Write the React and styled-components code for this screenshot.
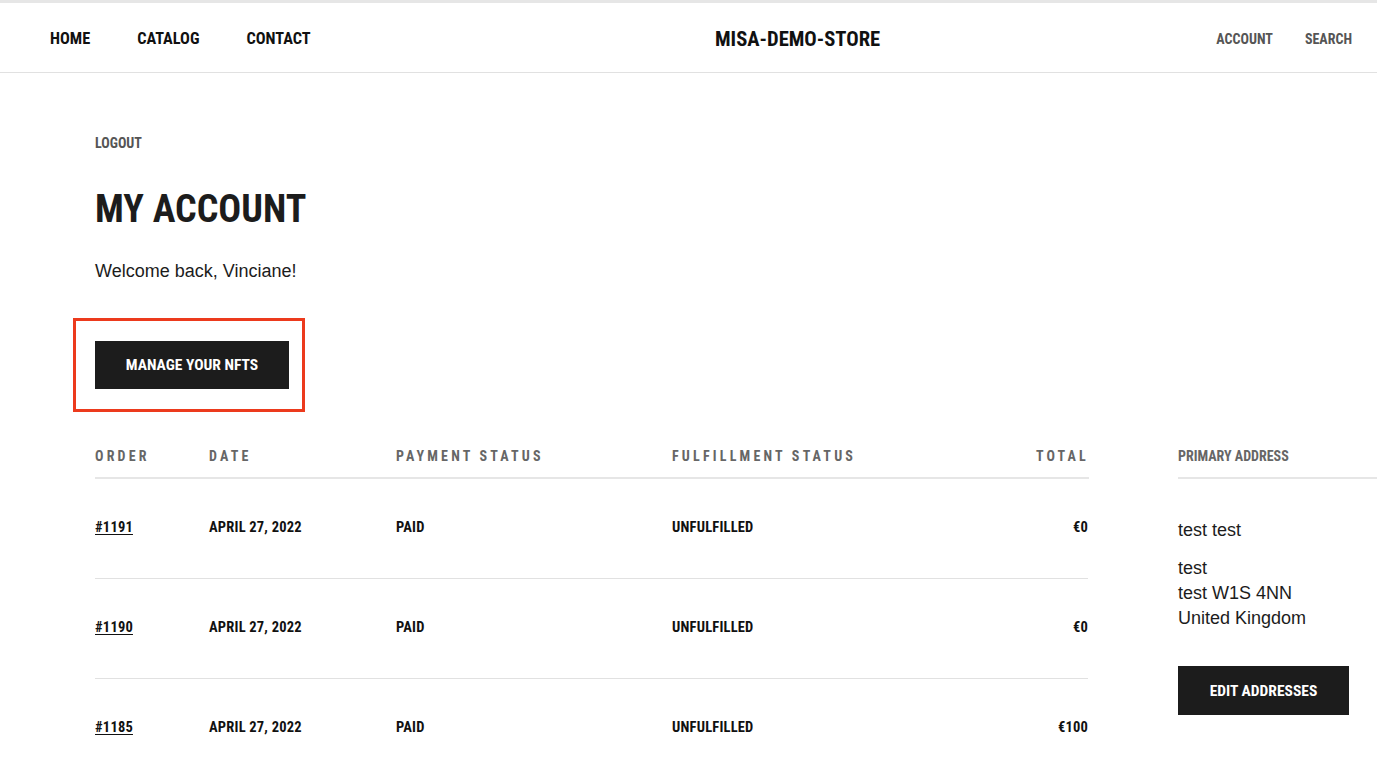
import React from 'react';
import styled, { createGlobalStyle } from 'styled-components';

const GlobalStyle = createGlobalStyle`
    html, body { margin: 0; padding: 0; background: #fff; }
    body { overflow: hidden; }
    * { box-sizing: border-box; }
`;

const condensed = `font-family: Roboto, "DejaVu Sans Condensed", sans-serif; font-stretch: 75%; font-weight: 700;`;

const orders = [
    { id: '#1191', date: 'APRIL 27, 2022', payment: 'PAID', fulfillment: 'UNFULFILLED', total: '€0' },
    { id: '#1190', date: 'APRIL 27, 2022', payment: 'PAID', fulfillment: 'UNFULFILLED', total: '€0' },
    { id: '#1185', date: 'APRIL 27, 2022', payment: 'PAID', fulfillment: 'UNFULFILLED', total: '€100' },
];

const App = () => {
    return (
        <Page>
            <GlobalStyle />
            <Header>
                <Nav>
                    <NavLink>HOME</NavLink>
                    <NavLink>CATALOG</NavLink>
                    <NavLink>CONTACT</NavLink>
                </Nav>
                <Logo>MISA-DEMO-STORE</Logo>
                <Utility>
                    <UtilityLink>ACCOUNT</UtilityLink>
                    <UtilityLink>SEARCH</UtilityLink>
                </Utility>
            </Header>
            <Main>
                <Logout>LOGOUT</Logout>
                <Title>MY ACCOUNT</Title>
                <Welcome>Welcome back, Vinciane!</Welcome>
                <Highlight>
                    <DarkButton>MANAGE YOUR NFTS</DarkButton>
                </Highlight>
                <Columns>
                    <OrderTable>
                        <HeadCell>ORDER</HeadCell>
                        <HeadCell>DATE</HeadCell>
                        <HeadCell>PAYMENT STATUS</HeadCell>
                        <HeadCell>FULFILLMENT STATUS</HeadCell>
                        <HeadCell $right>TOTAL</HeadCell>
                        {orders.map((o, i) => {
                            const last = i === orders.length - 1;
                            return (
                                <React.Fragment key={o.id}>
                                    <Cell $last={last}><OrderLink>{o.id}</OrderLink></Cell>
                                    <Cell $last={last}>{o.date}</Cell>
                                    <Cell $last={last}>{o.payment}</Cell>
                                    <Cell $last={last}>{o.fulfillment}</Cell>
                                    <Cell $last={last} $right>{o.total}</Cell>
                                </React.Fragment>
                            );
                        })}
                    </OrderTable>
                    <Sidebar>
                        <SideHead>PRIMARY ADDRESS</SideHead>
                        <Address>
                            <p>test test</p>
                            <p>test<br />test W1S 4NN<br />United Kingdom</p>
                        </Address>
                        <DarkButton $small>EDIT ADDRESSES</DarkButton>
                    </Sidebar>
                </Columns>
            </Main>
        </Page>
    );
};

export default App;

const Page = styled.div`
    width: 1377px;
    min-height: 763px;
    border-top: 3px solid #e6e6e6;
    font-family: "Liberation Sans", Arial, sans-serif;
    color: #1c1c1c;
`;

const Header = styled.header`
    height: 70px;
    border-bottom: 1px solid #e1e1e1;
    display: grid;
    grid-template-columns: 665px auto 1fr;
    align-items: center;
    padding: 2px 25px 0 50px;
`;

const Nav = styled.nav`
    display: flex;
    gap: 47px;
`;

const NavLink = styled.span`
    ${condensed}
    font-size: 16.3px;
    color: #111;
`;

const Logo = styled.div`
    ${condensed}
    font-size: 20.6px;
    color: #111;
`;

const Utility = styled.div`
    display: flex;
    justify-content: flex-end;
    gap: 32px;
`;

const UtilityLink = styled.span`
    ${condensed}
    font-size: 14px;
    color: #555;
`;

const Main = styled.main`
    padding: 62px 0 0 95px;
`;

const Logout = styled.div`
    ${condensed}
    font-size: 14px;
    color: #555;
    line-height: 16px;
`;

const Title = styled.h1`
    margin: 33px 0 0;
    ${condensed}
    font-size: 38px;
    line-height: 50px;
    color: #1c1c1c;
`;

const Welcome = styled.p`
    margin: 26px 0 0;
    font-size: 18px;
    line-height: 22px;
`;

const Highlight = styled.div`
    margin: 36px 0 0 -22px;
    width: 232px;
    height: 94px;
    border: 3px solid #ec3a1d;
    padding: 20px 0 0 19px;
`;

const DarkButton = styled.div`
    display: flex;
    align-items: center;
    justify-content: center;
    width: ${p => (p.$small ? '171px' : '194px')};
    height: ${p => (p.$small ? '49px' : '48px')};
    background: #1c1c1c;
    color: #fff;
    ${condensed}
    font-size: 15.5px;
`;

const Columns = styled.div`
    display: flex;
    gap: 90px;
    margin-top: 34px;
`;

const OrderTable = styled.div`
    width: 993px;
    display: grid;
    grid-template-columns: 114px 187px 276px 1fr auto;
`;

const HeadCell = styled.div`
    ${condensed}
    font-size: 14px;
    letter-spacing: 3.2px;
    color: #666;
    height: 33px;
    line-height: 20px;
    border-bottom: 2px solid #e6e6e6;
    text-align: ${p => (p.$right ? 'right' : 'left')};
    margin-right: ${p => (p.$right ? '-1px' : '0')};
`;

const Cell = styled.div`
    height: 100px;
    padding-top: 41px;
    ${condensed}
    font-size: 14.5px;
    letter-spacing: 0.2px;
    line-height: 16px;
    color: #111;
    border-bottom: ${p => (p.$last ? 'none' : '1px solid #e1e1e1')};
    text-align: ${p => (p.$right ? 'right' : 'left')};
`;

const OrderLink = styled.span`
    text-decoration: underline;
    text-underline-offset: 2px;
`;

const Sidebar = styled.div`
    flex: 1;
`;

const SideHead = styled.div`
    ${condensed}
    font-size: 14px;
    color: #666;
    height: 33px;
    line-height: 20px;
    border-bottom: 2px solid #e6e6e6;
`;

const Address = styled.div`
    padding-top: 39px;
    font-size: 18px;
    line-height: 25px;
    color: #1c1c1c;
    p { margin: 0 0 13px; }
    p:last-child { margin-bottom: 35px; }
`;
